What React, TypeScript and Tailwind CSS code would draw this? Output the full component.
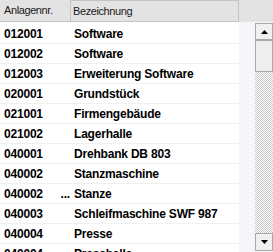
const rows: [string, string, boolean?][] = [
  ["012001", "Software"],
  ["012002", "Software"],
  ["012003", "Erweiterung Software"],
  ["020001", "Grundstück"],
  ["021001", "Firmengebäude"],
  ["021002", "Lagerhalle"],
  ["040001", "Drehbank DB 803"],
  ["040002", "Stanzmaschine"],
  ["040002", "Stanze", true],
  ["040003", "Schleifmaschine SWF 987"],
  ["040004", "Presse"],
  ["040004", "Presshalle"],
]

function Arrow({ up }: { up?: boolean }) {
  return (
    <svg width="7" height="4" viewBox="0 0 7 4" className="block">
      {up ? <path d="M3.5 0 L7 4 L0 4 Z" fill="#000" /> : <path d="M0 0 L7 0 L3.5 4 Z" fill="#000" />}
    </svg>
  )
}

export default function App() {
  return (
    <div
      className="flex h-[252px] w-[273px] flex-col overflow-hidden bg-white"
      style={{ fontFamily: '"Liberation Sans", Arial, sans-serif' }}
    >
      {/* column headers */}
      <div className="flex h-[22px] shrink-0 bg-[#e3e3e3] text-[11px] tracking-[-0.4px] text-[#1a1a1a]">
        <div className="flex w-[71px] items-center border-r border-b border-[#c4c4c4] pl-[4px]">Anlagennr.</div>
        <div className="flex w-[168px] items-center border-t border-r border-b border-[#c4c4c4] pl-[2px]">Bezeichnung</div>
        <div className="flex-1" />
      </div>

      <div className="flex min-h-0 flex-1">
        {/* rows */}
        <div className="w-[239px] pt-[2px] text-[12px] font-bold tracking-[-0.2px] text-black">
          {rows.map(([nr, name, cut], i) => (
            <div key={i} className="flex h-[20px] items-center border-b border-[#f0f0f0]">
              <div className="flex w-[71px] items-center justify-between pl-[4px] pr-[1px]">
                <span>{nr}</span>
                {cut && <span>...</span>}
              </div>
              <div className="pl-[3px]">{name}</div>
            </div>
          ))}
        </div>

        <div className="w-[16px] bg-[#f5f5fb]" />

        {/* vertical scrollbar */}
        <div className="flex w-[18px] flex-col bg-[#f5f5fb] pt-[1px] pb-[1px]">
          <div className="flex h-[17px] items-center justify-center border border-[#a8a8a8] bg-[#f0f0f0]">
            <Arrow up />
          </div>
          <div className="h-[32px] border border-[#a8a8a8] bg-[#efefef]" />
          <div className="flex-1 bg-[repeating-conic-gradient(#c8c8c8_0%_25%,#ffffff_0%_50%)] bg-[length:2px_2px]" />
          <div className="flex h-[18px] items-center justify-center border border-[#a8a8a8] bg-[#f0f0f0]">
            <Arrow />
          </div>
        </div>
      </div>
    </div>
  )
}
